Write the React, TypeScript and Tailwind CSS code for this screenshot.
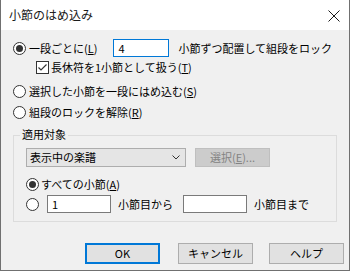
import React from 'react';

const font = { fontFamily: '"Noto Sans CJK JP", "Noto Sans", sans-serif' };

function Radio({ checked }: { checked?: boolean }) {
  return (
    <span className="flex h-[13px] w-[13px] shrink-0 items-center justify-center rounded-full border border-[#333333] bg-white">
      {checked && <span className="h-[7px] w-[7px] rounded-full bg-[#333333]" />}
    </span>
  );
}

function Checkbox() {
  return (
    <span className="flex h-[13px] w-[13px] shrink-0 items-center justify-center border border-[#333333] bg-white">
      <svg width="11" height="11" viewBox="0 0 11 11">
        <path d="M1.5 5.5 L4 8 L9.5 2.5" fill="none" stroke="#333333" strokeWidth="1.2" />
      </svg>
    </span>
  );
}

function Btn({ label, primary, className }: { label: string; primary?: boolean; className?: string }) {
  return (
    <button
      type="button"
      className={`flex h-[21px] w-[75px] items-center justify-center bg-[#e1e1e1] text-[11px] text-black ${
        primary ? 'border-2 border-[#0078d7]' : 'border border-[#adadad]'
      } ${className ?? ''}`}
    >
      {label}
    </button>
  );
}

export default function App() {
  return (
    <div
      style={font}
      className="flex h-[271px] w-[350px] flex-col border-x border-b border-[#707070] bg-[#f0f0f0] text-[11px] leading-none text-black"
    >
      {/* title bar */}
      <div className="flex h-[30px] shrink-0 items-center justify-between bg-white pl-[8px] pr-[9px]">
        <span className="text-[12px] text-[#1a1a1a]">小節のはめ込み</span>
        <svg width="12" height="12" viewBox="0 0 12 12" className="mt-[1px]">
          <path d="M0.5 0.5 L11.5 11.5 M11.5 0.5 L0.5 11.5" stroke="#1a1a1a" strokeWidth="1" />
        </svg>
      </div>

      <div className="flex flex-col pt-[9px]">
        <div className="flex h-[18px] items-center pl-[12px]">
          <Radio checked />
          <span className="ml-[3px]">一段ごとに(<u>L</u>)</span>
          <div className="ml-[16px] flex h-[18px] w-[56px] items-center border border-[#0078d7] bg-white pl-[4px]">4</div>
          <span className="ml-[9px]">小節ずつ配置して組段をロック</span>
        </div>
        <div className="mt-[1px] flex h-[18px] items-center pl-[35px]">
          <Checkbox />
          <span className="ml-[2px]">長休符を1小節として扱う(<u>T</u>)</span>
        </div>
        <div className="mt-[6px] flex h-[18px] items-center pl-[12px]">
          <Radio />
          <span className="ml-[3px]">選択した小節を一段にはめ込む(<u>S</u>)</span>
        </div>
        <div className="mt-[3px] flex h-[18px] items-center pl-[12px]">
          <Radio />
          <span className="ml-[3px]">組段のロックを解除(<u>R</u>)</span>
        </div>

        {/* 適用対象 group */}
        <div className="relative mx-[12px] mt-[14px] h-[87px] border border-[#dcdcdc] px-[12px] pt-[12px]">
          <span className="absolute left-[6px] top-[-7px] bg-[#f0f0f0] px-[2px]">適用対象</span>
          <div className="flex items-center">
            <div className="flex h-[19px] w-[160px] items-center justify-between border border-[#adadad] bg-[#e5e5e5] pl-[3px] pr-[5px]">
              <span>表示中の楽譜</span>
              <svg width="8" height="5" viewBox="0 0 8 5">
                <path d="M0.5 0.5 L4 4 L7.5 0.5" fill="none" stroke="#333333" strokeWidth="1" />
              </svg>
            </div>
            <div className="ml-[9px] flex h-[19px] w-[75px] items-center justify-center border border-[#bfbfbf] bg-[#cccccc] text-[#838383]">
              選択(<u>E</u>)...
            </div>
          </div>
          <div className="mt-[8px] flex h-[18px] items-center">
            <Radio checked />
            <span className="ml-[2px]">すべての小節(<u>A</u>)</span>
          </div>
          <div className="mt-[2px] flex h-[18px] items-center">
            <Radio />
            <div className="ml-[8px] flex h-[18px] w-[64px] items-center border border-[#7a7a7a] bg-white pl-[4px]">1</div>
            <span className="ml-[7px]">小節目から</span>
            <div className="ml-[10px] flex h-[18px] w-[64px] items-center border border-[#7a7a7a] bg-white" />
            <span className="ml-[7px]">小節目まで</span>
          </div>
        </div>

        <div className="mt-[21px] flex pl-[84px]">
          <Btn label="OK" primary />
          <Btn label="キャンセル" className="ml-[18px]" />
          <Btn label="ヘルプ" className="ml-[16px]" />
        </div>
      </div>
    </div>
  );
}
